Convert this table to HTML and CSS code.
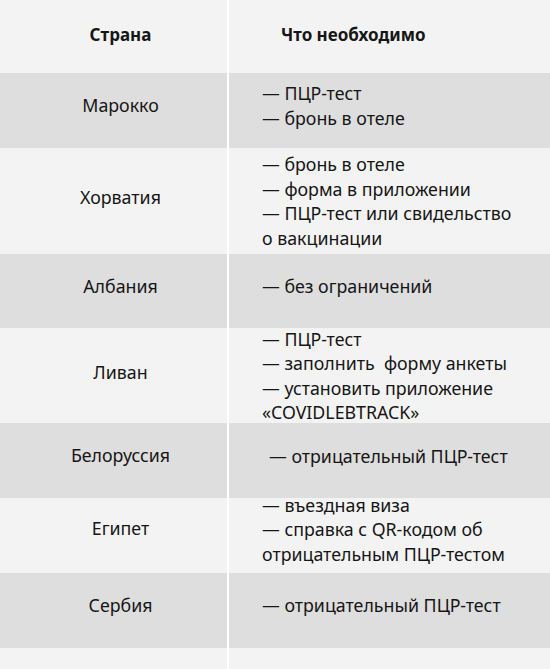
FILE: index.html
```html
<!DOCTYPE html>
<html lang="ru">
<head>
<meta charset="utf-8">
<link rel="stylesheet" href="styles.css">
</head>
<body>
<div class="table">
  <div class="cell country head light">Страна</div>
  <div class="cell need head light head-need">Что необходимо</div>

  <div class="cell country dark r1">Марокко</div>
  <div class="cell need dark r1">— ПЦР-тест<br>— бронь в отеле</div>

  <div class="cell country light r2">Хорватия</div>
  <div class="cell need light r2">— бронь в отеле<br>— форма в приложении<br>— ПЦР-тест или свидельство<br>о вакцинации</div>

  <div class="cell country dark r3">Албания</div>
  <div class="cell need dark r3">— без ограничений</div>

  <div class="cell country light r4">Ливан</div>
  <div class="cell need light r4">— ПЦР-тест<br>— заполнить&nbsp; форму анкеты<br>— установить приложение<br>«COVIDLEBTRACK»</div>

  <div class="cell country dark r5">Белоруссия</div>
  <div class="cell need dark r5 indent">— отрицательный ПЦР-тест</div>

  <div class="cell country light r6">Египет</div>
  <div class="cell need light r6">— въездная виза<br>— справка с QR-кодом об<br>отрицательным ПЦР-тестом</div>

  <div class="cell country dark r7">Сербия</div>
  <div class="cell need dark r7">— отрицательный ПЦР-тест</div>

  <div class="cell country light r8"></div>
  <div class="cell need light r8"></div>
</div>
</body>
</html>
```
FILE: styles.css
```css
html, body {
  margin: 0;
  padding: 0;
  background: #ffffff;
}
body {
  width: 550px;
  height: 669px;
  overflow: hidden;
  font-family: "Noto Sans", "Open Sans", sans-serif;
  color: #161616;
}
.table {
  display: grid;
  grid-template-columns: 227px 1fr;
  grid-template-rows: 73px 75px 106px 74px 95px 75px 75px 75px 22px;
  column-gap: 2px;
  background: #ffffff;
}
.cell {
  display: flex;
  align-items: center;
  font-size: 17.8px;
  line-height: 24.5px;
  box-sizing: border-box;
}
.light { background: #f3f3f3; }
.dark { background: #dedede; }
.country {
  justify-content: center;
  padding-left: 14px;
}
.need {
  padding-left: 33px;
}
.head {
  font-size: 17px;
  font-weight: 700;
  padding-bottom: 2px;
}
.head-need {
  padding-left: 52px;
}
.r1 { padding-bottom: 10px; }
.r1.country { padding-bottom: 10px; }
.r2.country { padding-bottom: 8px; }
.r3 { padding-bottom: 10px; }
.r4.country { padding-bottom: 6px; }
.r5 { padding-bottom: 8px; }
.r5.country { padding-bottom: 10px; }
.r6.need { padding-bottom: 12px; }
.r6.country { padding-bottom: 14px; }
.r7 { padding-bottom: 10px; }
.indent { padding-left: 40px; }
```
